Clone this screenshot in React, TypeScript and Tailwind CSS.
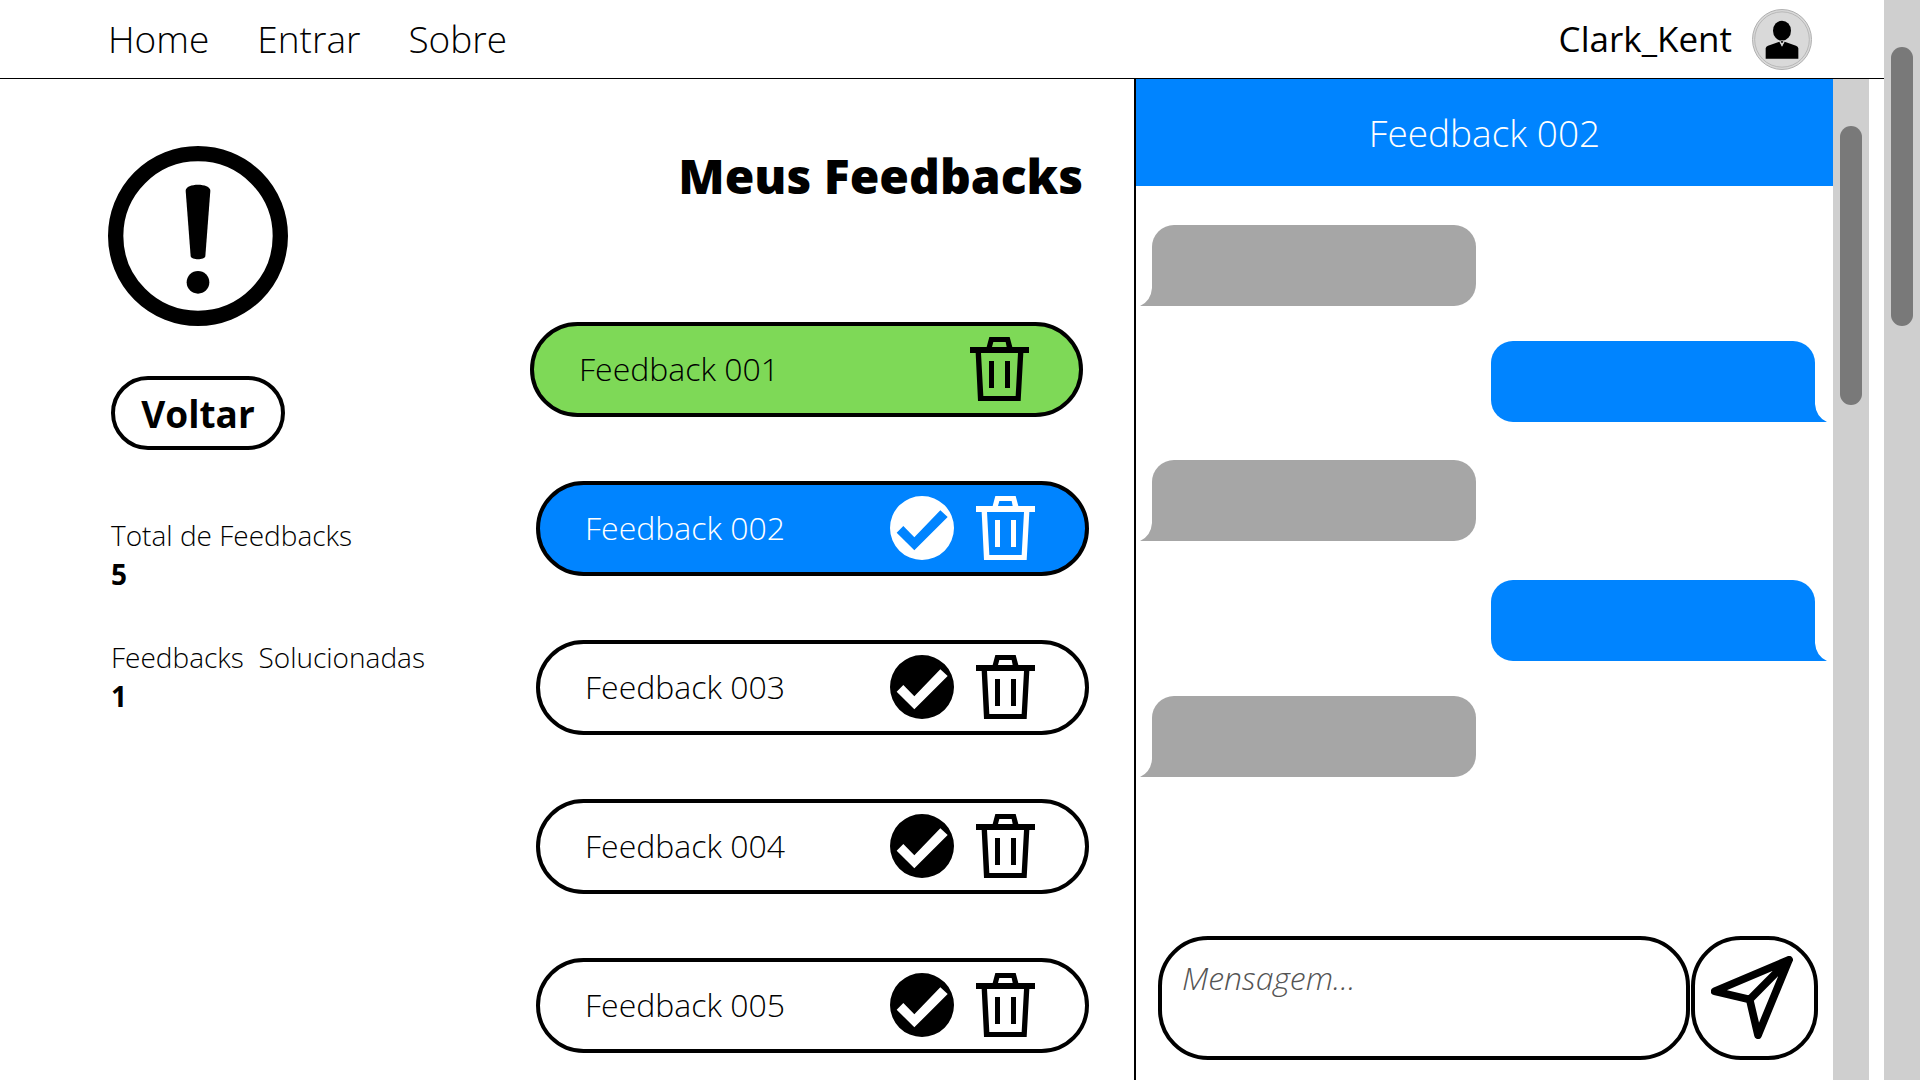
type Status = 'solved' | 'active' | 'open';

const feedbacks: { name: string; status: Status }[] = [
  { name: 'Feedback 001', status: 'solved' },
  { name: 'Feedback 002', status: 'active' },
  { name: 'Feedback 003', status: 'open' },
  { name: 'Feedback 004', status: 'open' },
  { name: 'Feedback 005', status: 'open' },
];

const pillStyles: Record<Status, string> = {
  solved: 'bg-[#7ed957] text-black mr-1.5',
  active: 'bg-[#0084ff] text-white',
  open: 'bg-white text-black',
};

const messages: { mine: boolean; space: string }[] = [
  { mine: false, space: 'mt-[39px]' },
  { mine: true, space: 'mt-[35px]' },
  { mine: false, space: 'mt-[38px]' },
  { mine: true, space: 'mt-[39px]' },
  { mine: false, space: 'mt-[35px]' },
];

function TrashIcon() {
  return (
    <svg viewBox="0 0 177 192" className="h-16 w-[59px]" fill="currentColor" fillRule="evenodd" aria-hidden="true">
      <path d="M58 0H119L127 30H177V48H160L152 192H24L17 48H0V30H50ZM70 15L66 30H110L107 15ZM33 48L40 177H137L144 48Z" />
      <path d="M57 72H72V153H57ZM105 72H120V153H105Z" />
    </svg>
  );
}

function CheckIcon() {
  return (
    <svg viewBox="0 0 192 192" className="size-16" fill="currentColor" fillRule="evenodd" aria-hidden="true">
      <path d="M96 0A96 96 0 0 1 96 192A96 96 0 0 1 96 0ZM20 110L73 163L173 63L151 43L73 124L40 90Z" />
    </svg>
  );
}

function AlertIcon() {
  return (
    <svg viewBox="0 0 540 540" className="size-[180px]" aria-hidden="true">
      <circle cx="270" cy="270" r="247" fill="none" stroke="black" strokeWidth="46" />
      <path d="M233 134C233 110 307 110 307 134L292 331C290 343 250 343 248 331Z" />
      <circle cx="270" cy="409" r="34" />
    </svg>
  );
}

function AvatarIcon() {
  return (
    <svg viewBox="0 0 180 183" className="h-[61px] w-[60px]" aria-hidden="true">
      <ellipse cx="90" cy="91.5" rx="88.5" ry="90" fill="#d9d9d9" stroke="#b0b0b0" strokeWidth="3" />
      <ellipse cx="90" cy="91.5" rx="82" ry="83" fill="none" stroke="#a6a6a6" strokeWidth="2" />
      <ellipse cx="90" cy="65" rx="27" ry="30" />
      <path d="M41 149V118Q42 112 48 110L82 98L90 113L98 98L132 110Q138 112 139 118V149Z" />
      <path d="M83 97L90 94L97 97L90 112Z" fill="#d9d9d9" />
      <path d="M86 98L90 95L94 98L92 101H88Z" />
    </svg>
  );
}

function SendIcon() {
  return (
    <svg
      viewBox="154 108 246 248"
      className="h-[83px] w-[82px]"
      fill="none"
      stroke="black"
      strokeWidth="23"
      strokeLinecap="round"
      strokeLinejoin="round"
      aria-hidden="true"
    >
      <path d="M165 213L388 119L295 345L270 238ZM270 238L388 119" />
    </svg>
  );
}

function Bubble({ mine, space }: { mine: boolean; space: string }) {
  return (
    <div className={`flex items-end ${space} ${mine ? 'flex-row-reverse text-[#0084ff]' : 'text-[#a6a6a6]'}`}>
      <svg viewBox="0 0 12 18" className={mine ? 'h-[18px] w-3 -scale-x-100' : 'h-[18px] w-3'} fill="currentColor" aria-hidden="true">
        <path d="M12 0Q11 13 0 18H12Z" />
      </svg>
      <div
        className={`h-[81px] w-[324px] bg-current ${
          mine ? 'rounded-t-[22px] rounded-bl-[22px]' : 'rounded-t-[22px] rounded-br-[22px]'
        }`}
      />
    </div>
  );
}

export default function App() {
  return (
    <div className="flex min-h-screen bg-white font-['Open_Sans',sans-serif] text-black">
      <div className="flex min-w-0 flex-1 flex-col">
        <header className="flex h-[79px] items-center justify-between border-b border-black pr-[72px] pl-[108px]">
          <nav className="flex gap-12 text-[37px] font-light">
            <a href="#home">Home</a>
            <a href="#entrar">Entrar</a>
            <a href="#sobre">Sobre</a>
          </nav>
          <a href="#perfil" className="flex items-center gap-5 text-[35px]">
            Clark_Kent
            <AvatarIcon />
          </a>
        </header>

        <div className="flex flex-1 pr-[15px]">
          <main className="flex flex-1 justify-between pr-[45px] pl-[108px]">
            <aside className="pt-[67px]">
              <AlertIcon />
              <div className="pl-[3px]">
                <button type="button" className="mt-[50px] h-[74px] w-[174px] rounded-full border-4 border-black text-[37px] leading-none font-bold">
                  Voltar
                </button>
                <dl className="mt-[66px] text-[28px] leading-[39px]">
                  <dt className="font-light">Total de Feedbacks</dt>
                  <dd className="font-bold">5</dd>
                  <dt className="mt-11 font-light whitespace-pre">{'Feedbacks  Solucionadas'}</dt>
                  <dd className="font-bold">1</dd>
                </dl>
              </div>
            </aside>

            <section className="pt-16">
              <h1 className="pr-1.5 text-right text-[48px] leading-[66px] font-extrabold">Meus Feedbacks</h1>
              <ul className="mt-[113px] flex flex-col items-end gap-16">
                {feedbacks.map(({ name, status }) => (
                  <li
                    key={name}
                    className={`flex h-[95px] w-[553px] items-center gap-[22px] rounded-full border-4 border-black pr-[50px] pb-0.5 pl-[45px] ${pillStyles[status]}`}
                  >
                    <a href="#chat" className="flex-1 text-[32px] font-light">
                      {name}
                    </a>
                    {status !== 'solved' && (
                      <button type="button" aria-label={`Solucionar ${name}`}>
                        <CheckIcon />
                      </button>
                    )}
                    <button type="button" aria-label={`Excluir ${name}`}>
                      <TrashIcon />
                    </button>
                  </li>
                ))}
              </ul>
            </section>
          </main>

          <section className="flex w-[735px] border-l-2 border-black">
            <div className="flex flex-1 flex-col">
              <h2 className="flex h-[107px] items-center justify-center bg-[#0084ff] text-[37px] font-light text-white">
                Feedback 002
              </h2>
              <div className="pr-1.5 pl-1">
                {messages.map((message, i) => (
                  <Bubble key={i} {...message} />
                ))}
              </div>
              <form className="mt-auto mb-5 flex gap-px pr-[15px] pl-[22px]">
                <textarea
                  aria-label="Mensagem"
                  placeholder="Mensagem…"
                  className="h-[124px] min-w-0 flex-1 resize-none rounded-[50px] border-4 border-black px-5 py-3.5 text-[32px] font-light italic outline-none placeholder:text-[#545454]"
                />
                <button
                  type="button"
                  aria-label="Enviar"
                  className="flex h-[124px] w-[127px] items-center justify-center rounded-[50px] border-4 border-black pr-1.5 pb-0.5"
                >
                  <SendIcon />
                </button>
              </form>
            </div>
            <div className="w-9 bg-[#cfcfcf] pt-[47px]">
              <div className="mx-auto h-[279px] w-[22px] rounded-full bg-[#797979]" />
            </div>
          </section>
        </div>
      </div>
      <div className="w-9 bg-[#cfcfcf] pt-[47px]">
        <div className="mx-auto h-[279px] w-[22px] rounded-full bg-[#797979]" />
      </div>
    </div>
  );
}
